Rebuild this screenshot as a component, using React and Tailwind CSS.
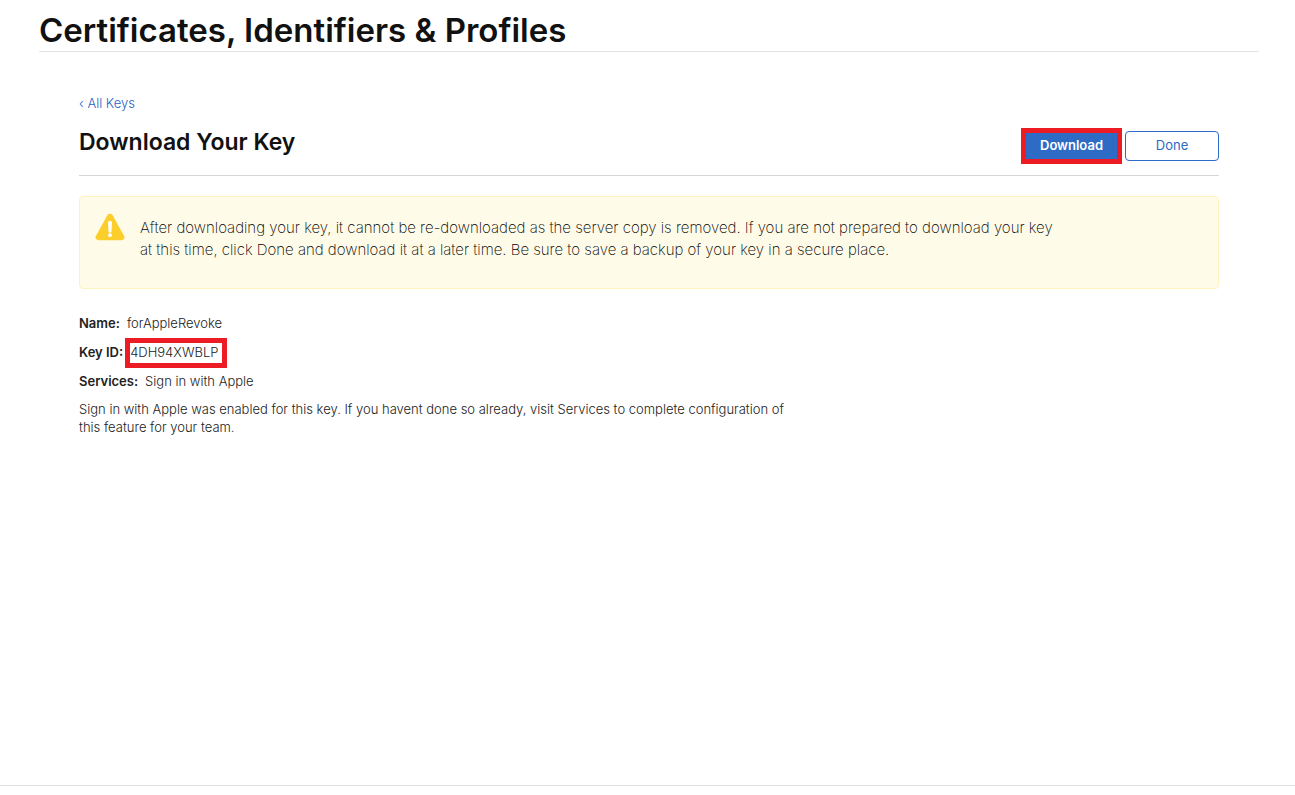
function WarningIcon() {
  return (
    <svg viewBox="0 0 30 28" className="h-7 w-[30px] shrink-0" aria-hidden="true">
      <path d="M12.5 2.1a2.9 2.9 0 0 1 5 0l11.6 20.8a2.9 2.9 0 0 1-2.5 4.3H3.4a2.9 2.9 0 0 1-2.5-4.3z" fill="#fbce2b" />
      <path d="M13 9.8a2 2 0 0 1 4 0l-.5 8.4a1.5 1.5 0 0 1-3 0z" fill="#fff" />
      <circle cx="15" cy="22.2" r="1.9" fill="#fff" />
    </svg>
  );
}

export default function App() {
  return (
    <div className="flex min-h-screen flex-col bg-white font-['Inter',sans-serif] text-[13px] text-[#222]">
      <header className="mr-9 ml-[39px] border-b border-[#e3e3e3] pt-[10px]">
        <h1 className="text-[33px] leading-[41px] font-semibold text-[#111]">Certificates, Identifiers &amp; Profiles</h1>
      </header>
      <main className="mr-[76px] ml-[79px] flex-1 pt-[42px]">
        <a href="#keys" className="block w-fit leading-[18px] font-light text-[#2d5fc4]">‹ All Keys</a>
        <div className="flex items-start justify-between border-b border-[#d6d6d6] pt-4 pb-[11px]">
          <h2 className="text-[23px] leading-7 font-semibold text-[#111]">Download Your Key</h2>
          <div className="flex items-center gap-[3px]">
            <button type="button" className="h-9 w-[101px] border-5 border-[#ed1c24] bg-[#2d6bc4] font-semibold text-white">Download</button>
            <button type="button" className="h-[30px] w-[94px] rounded-[4px] border border-[#2d6bc4] bg-white text-[#2d6bc4]">Done</button>
          </div>
        </div>
        <section className="mt-5 flex gap-[15px] rounded-[4px] border border-[#fdf3c0] bg-[#fffbe9] px-[15px] pt-4 pb-[27px]">
          <WarningIcon />
          <p className="max-w-[920px] pt-1 text-[15px] leading-[22px] font-extralight text-black">
            After downloading your key, it cannot be re-downloaded as the server copy is removed. If you are not prepared to download your key at this time, click Done and download it at a later time. Be sure to save a backup of your key in a secure place.
          </p>
        </section>
        <dl className="mt-5 font-light">
          <div className="flex h-[29px] items-center gap-[7px]"><dt className="font-semibold">Name:</dt><dd>forAppleRevoke</dd></div>
          <div className="flex h-[29px] items-center gap-[2px]"><dt className="font-semibold">Key ID:</dt><dd className="flex h-[30px] w-[102px] items-center border-5 border-[#ed1c24]">4DH94XWBLP</dd></div>
          <div className="flex h-[29px] items-center gap-[7px]"><dt className="font-semibold">Services:</dt><dd>Sign in with Apple</dd></div>
        </dl>
        <p className="mt-1 max-w-[720px] leading-[18px] font-light">
          Sign in with Apple was enabled for this key. If you havent done so already, visit Services to complete configuration of this feature for your team.
        </p>
      </main>
      <footer className="h-[10px] border-t border-[#e3e3e3]" />
    </div>
  );
}
